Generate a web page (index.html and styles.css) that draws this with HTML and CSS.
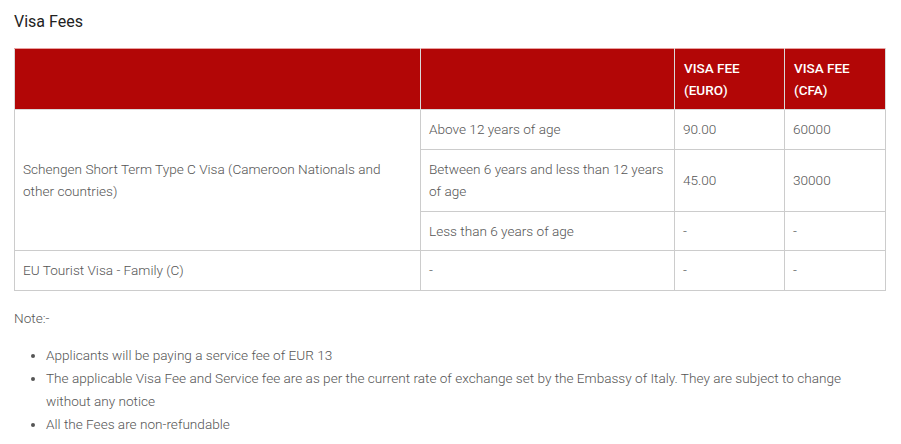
FILE: index.html
```html
<!DOCTYPE html>
<html>
<head>
<meta charset="utf-8">
<link rel="stylesheet" href="styles.css">
</head>
<body>
<div class="page">
  <h2 class="title">Visa Fees</h2>
  <table class="fees">
    <colgroup>
      <col class="c1"><col class="c2"><col class="c3"><col class="c4">
    </colgroup>
    <thead>
      <tr><th></th><th></th><th>VISA FEE<br>(EURO)</th><th>VISA FEE<br>(CFA)</th></tr>
    </thead>
    <tbody>
      <tr><td rowspan="3">Schengen Short Term Type C Visa (Cameroon Nationals and other countries)</td><td>Above 12 years of age</td><td>90.00</td><td>60000</td></tr>
      <tr><td>Between 6 years and less than 12 years of age</td><td>45.00</td><td>30000</td></tr>
      <tr><td>Less than 6 years of age</td><td>-</td><td>-</td></tr>
      <tr><td>EU Tourist Visa - Family (C)</td><td>-</td><td>-</td><td>-</td></tr>
    </tbody>
  </table>
  <p class="note">Note:-</p>
  <ul class="list">
    <li>Applicants will be paying a service fee of EUR 13</li>
    <li>The applicable Visa Fee and Service fee are as per the current rate of exchange set by the Embassy of Italy. They are subject to change without any notice</li>
    <li>All the Fees are non-refundable</li>
  </ul>
</div>
</body>
</html>
```
FILE: styles.css
```css
html, body { margin: 0; padding: 0; background: #fff; }
body { font-family: Roboto, "Liberation Sans", sans-serif; color: #555; }
.page { padding: 12px 16px 0 14px; }
.title { margin: 0 0 16px 0; font-size: 16px; font-weight: 400; color: #222; line-height: 20px; }
.fees { border-collapse: collapse; width: 872px; table-layout: fixed; }
.c1 { width: 406px; } .c2 { width: 254px; } .c3 { width: 110px; } .c4 { width: 101px; }
.fees th, .fees td { border: 1px solid #ccc; text-align: left; vertical-align: middle; }
.fees th { background: #b20606; color: #fff; font-size: 13.5px; font-weight: 500; line-height: 22px; padding: 8px 9px 8px 9px; height: 44px; }
.fees thead th { border-color: #d9d9d9; border-top-color: #e8a0a0; border-left-color: #d9d9d9; }
.fees td { font-size: 13.6px; font-weight: 300; line-height: 22.5px; padding: 8px; color: #555; }
.note { margin: 16px 0 0 0; font-size: 13.6px; font-weight: 300; line-height: 22px; }
.list { margin: 15px 0 0 0; padding-left: 32px; font-size: 13.6px; font-weight: 300; line-height: 23px; }
```
